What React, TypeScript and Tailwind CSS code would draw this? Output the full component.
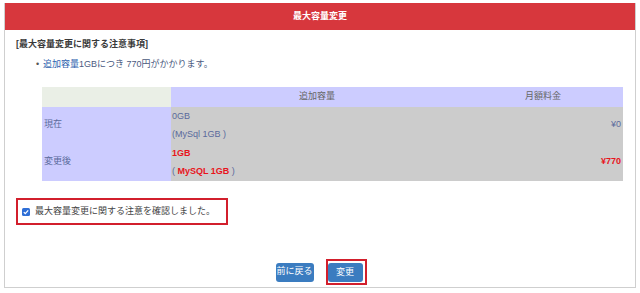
const font = { fontFamily: '"Liberation Sans", "Noto Sans CJK JP", sans-serif' };

const CheckIcon = () => (
  <svg width="8" height="8" viewBox="0 0 8 8" className="block">
    <rect x="0" y="0" width="8" height="8" rx="1.5" fill="#2f6fd6" />
    <path d="M1.8 4.1 L3.3 5.6 L6.2 2.4" stroke="#fff" strokeWidth="1.3" fill="none" />
  </svg>
);

export default function App() {
  return (
    <div className="w-[640px] h-[293px] bg-white pt-[3px] pl-[4px]" style={font}>
      <div className="w-[632px] h-[285px] border border-[#cfcfcf] border-t-0 flex flex-col">
        {/* header */}
        <div className="h-[27px] bg-[#d7373d] flex items-center justify-center text-white text-[9px] font-bold">
          最大容量変更
        </div>

        <div className="flex flex-col pl-[11px] pt-[6px]">
          <div className="h-[16px] leading-[16px] text-[9px] font-bold text-[#3a3a3a]">
            [最大容量変更に関する注意事項]
          </div>
          <div className="h-[16px] leading-[16px] mt-[4px] text-[9px] text-[#4a5a80] flex pl-[20px]">
            <span className="w-[7px] text-[#555]">•</span>
            <span className="text-[#2d5fae]">追加容量</span>
            <span>1GBにつき 770円がかかります。</span>
          </div>

          {/* table */}
          <div className="mt-[15px] ml-[26px] w-[581px] text-[9px]">
            <div className="flex h-[20px] text-[#666]">
              <div className="w-[129px] bg-[#eaefe6]"></div>
              <div className="w-[292px] bg-[#ccccff] flex items-center justify-center">追加容量</div>
              <div className="w-[160px] bg-[#ccccff] flex items-center justify-center">月額料金</div>
            </div>
            <div className="flex h-[36px] text-[#5a6a9c]">
              <div className="w-[129px] bg-[#ccccff] flex items-center pl-[2px]">現在</div>
              <div className="w-[292px] bg-[#cccccc] flex flex-col pl-[1px]">
                <div className="h-[18px] leading-[18px]">0GB</div>
                <div className="h-[18px] leading-[18px]">(MySql 1GB )</div>
              </div>
              <div className="w-[160px] bg-[#cccccc] flex items-center justify-end pr-[2px]">¥0</div>
            </div>
            <div className="flex h-[38px] text-[#5a6a9c]">
              <div className="w-[129px] bg-[#ccccff] flex items-center pl-[2px]">変更後</div>
              <div className="w-[292px] bg-[#cccccc] flex flex-col pl-[1px] pt-[1px]">
                <div className="h-[18px] leading-[18px] text-[#e8141c] font-bold">1GB</div>
                <div className="h-[18px] leading-[18px]">
                  ( <span className="text-[#e8141c] font-bold">MySQL 1GB</span> )
                </div>
              </div>
              <div className="w-[160px] bg-[#cccccc] flex items-center justify-end pr-[2px] text-[#e8141c] font-bold">
                ¥770
              </div>
            </div>
          </div>

          {/* confirmation */}
          <div className="mt-[17px] w-[212px] h-[27px] border-2 border-[#d21f2c] flex items-center pl-[4px] gap-[5px] text-[9px] text-[#444]">
            <CheckIcon />
            <span>最大容量変更に関する注意を確認しました。</span>
          </div>
        </div>

        {/* buttons */}
        <div className="mt-[34px] flex justify-center items-center gap-[12px] pl-[2px] text-[9px] text-white">
          <button className="w-[38px] h-[19px] bg-[#3b7cc0] rounded-[3px]">前に戻る</button>
          <div className="border-2 border-[#d21f2c] pt-[2px] pb-[1px] pr-[2px]">
            <button className="block w-[35px] h-[19px] bg-[#3b7cc0] rounded-[3px]">変更</button>
          </div>
        </div>
      </div>
    </div>
  );
}
